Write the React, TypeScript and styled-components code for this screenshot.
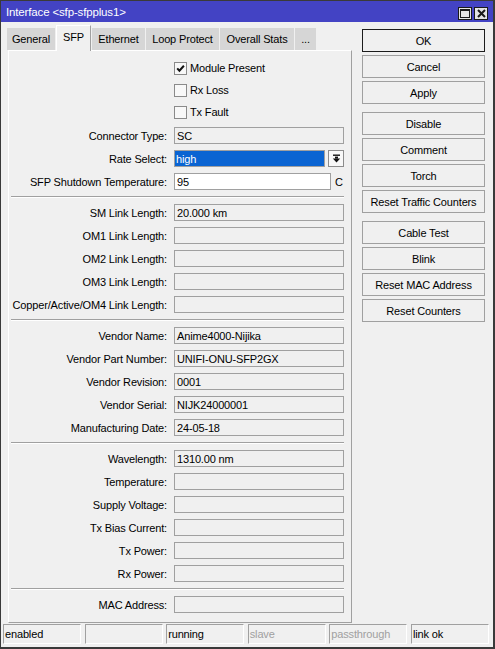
import React from "react";
import styled, { createGlobalStyle } from "styled-components";

const GlobalStyle = createGlobalStyle`
  html, body { margin: 0; padding: 0; background: #f0f0f0; }
  body { font-family: "Liberation Sans", Arial, sans-serif; font-size: 11px; }
`;

const Window = styled.div`
  width: 495px;
  height: 649px;
  box-sizing: border-box;
  border: 1px solid #3a3a3a;
  border-right-width: 2px;
  border-bottom-width: 2px;
  background: #f0f0f0;
  display: flex;
  flex-direction: column;
  font-family: "Liberation Sans", Arial, sans-serif;
  font-size: 11px;
  letter-spacing: -0.15px;
  color: #000;
  overflow: hidden;
`;

const TitleBar = styled.div`
  height: 21px;
  flex: none;
  background: #4343c4;
  color: #fff;
  display: flex;
  align-items: center;
  justify-content: space-between;
  padding: 0 5px 0 5px;
`;

const TitleText = styled.span`
  white-space: nowrap;
  font-size: 11.5px;
`;

const TitleButtons = styled.div`
  display: flex;
  gap: 2px;
  align-self: flex-end;
  margin-bottom: 2px;
`;

const TitleBox = styled.div`
  width: 14px;
  height: 13px;
  box-sizing: border-box;
  border: 1px solid #1a1a1a;
  background: #e4e4e4;
  display: flex;
  align-items: center;
  justify-content: center;
`;

const Body = styled.div`
  flex: 1;
  min-height: 0;
  display: flex;
`;

const LeftCol = styled.div`
  width: 345px;
  margin: 3px 0 0 6px;
  display: flex;
  flex-direction: column;
`;

const TabRow = styled.div`
  height: 25px;
  flex: none;
  display: flex;
  align-items: flex-end;
`;

const Tab = styled.div<{ $w: number; $active?: boolean }>`
  width: ${(p) => p.$w}px;
  box-sizing: border-box;
  margin-right: 1px;
  display: flex;
  align-items: center;
  justify-content: center;
  white-space: nowrap;
  height: ${(p) => (p.$active ? 26 : 22)}px;
  background: ${(p) => (p.$active ? "#f0f0f0" : "#d6d6d6")};
  margin-bottom: ${(p) => (p.$active ? -1 : 0)}px;
  padding-bottom: ${(p) => (p.$active ? 3 : 0)}px;
  border-left: ${(p) => (p.$active ? "1px solid #ffffff" : "none")};
  border-top: ${(p) => (p.$active ? "1px solid #ffffff" : "none")};
  border-right: ${(p) => (p.$active ? "1px solid #a0a0a0" : "none")};
  position: relative;
  z-index: ${(p) => (p.$active ? 1 : 0)};
`;

const Panel = styled.div`
  flex: 1;
  width: 344px;
  margin-left: 1px;
  box-sizing: border-box;
  border-top: 1px solid #ffffff;
  border-left: 1px solid #ffffff;
  border-right: 1px solid #a0a0a0;
  border-bottom: 1px solid #a0a0a0;
  padding-top: 6px;
`;

const CheckGroup = styled.div`
  margin-bottom: 1px;
`;

const Row = styled.div<{ $h?: number }>`
  height: ${(p) => p.$h ?? 23}px;
  display: grid;
  grid-template-columns: 158px 170px;
  column-gap: 7px;
  align-items: center;
`;

const Label = styled.div`
  display: flex;
  justify-content: flex-end;
  white-space: nowrap;
`;

const Content = styled.div`
  display: flex;
  align-items: center;
  gap: 3px;
`;

const Field = styled.div<{ $w?: number; $editable?: boolean }>`
  width: ${(p) => (p.$w ? `${p.$w}px` : "100%")};
  height: 17px;
  box-sizing: border-box;
  border: 1px solid #a0a0a0;
  background: ${(p) => (p.$editable ? "#ffffff" : "#f0f0f0")};
  padding-left: 2px;
  display: flex;
  align-items: center;
  white-space: nowrap;
  overflow: hidden;
`;

const SelectValue = styled.div`
  width: 151px;
  height: 17px;
  box-sizing: border-box;
  border: 1px solid #a0a0a0;
  background: #0a64d2;
  color: #ffffff;
  padding-left: 1px;
  display: flex;
  align-items: center;
`;

const DropButton = styled.div`
  width: 16px;
  height: 17px;
  box-sizing: border-box;
  border: 1px solid #8c8c8c;
  background: #f8f8f8;
  display: flex;
  align-items: center;
  justify-content: center;
`;

const Unit = styled.span`
  margin-left: 1px;
`;

const CheckBox = styled.div`
  width: 13px;
  height: 13px;
  box-sizing: border-box;
  border: 1px solid #8a8a8a;
  background: #f8f8f8;
  display: flex;
  align-items: center;
  justify-content: center;
`;

const Separator = styled.div`
  height: 0;
  margin: 3px 7px 3px 2px;
  border-top: 1px solid #a0a0a0;
  border-bottom: 1px solid #ffffff;
`;

const RightCol = styled.div`
  width: 123px;
  margin: 7px 0 0 10px;
  display: flex;
  flex-direction: column;
  gap: 3px;
`;

const Button = styled.div<{ $default?: boolean; $groupStart?: boolean }>`
  height: 23px;
  box-sizing: border-box;
  border: 1px solid ${(p) => (p.$default ? "#1c1c1c" : "#a0a0a0")};
  background: #f0f0f0;
  display: flex;
  align-items: center;
  justify-content: center;
  white-space: nowrap;
  margin-top: ${(p) => (p.$groupStart ? 5 : 0)}px;
`;

const StatusBar = styled.div`
  flex: none;
  height: 24px;
  box-sizing: border-box;
  padding: 1px 4px 3px 2px;
  display: grid;
  grid-template-columns: repeat(6, 1fr);
  column-gap: 3.5px;
`;

const StatusCell = styled.div<{ $dim?: boolean }>`
  height: 20px;
  box-sizing: border-box;
  border-top: 1px solid #a0a0a0;
  border-left: 1px solid #a0a0a0;
  border-right: 1px solid #ffffff;
  border-bottom: 1px solid #ffffff;
  padding-left: 1px;
  display: flex;
  align-items: center;
  white-space: nowrap;
  color: ${(p) => (p.$dim ? "#a0a0a0" : "#000000")};
`;

const MaxIcon = () => (
  <svg width="10" height="9" viewBox="0 0 10 9">
    <rect x="0.5" y="0.5" width="9" height="8" fill="none" stroke="#1a1a1a" />
    <rect x="0" y="0" width="10" height="2" fill="#1a1a1a" />
  </svg>
);

const CloseIcon = () => (
  <svg width="9" height="9" viewBox="0 0 9 9">
    <path d="M1 1 L8 8 M8 1 L1 8" stroke="#1a1a1a" strokeWidth="2" />
  </svg>
);

const CheckIcon = () => (
  <svg width="9" height="9" viewBox="0 0 9 9">
    <path d="M1.2 4.4 L3.4 6.7 L7.9 1.8" fill="none" stroke="#111" strokeWidth="2" />
  </svg>
);

const DropIcon = () => (
  <svg width="9" height="9" viewBox="0 0 9 9">
    <rect x="1" y="0.5" width="7" height="1.4" fill="#111" />
    <rect x="3" y="2.6" width="3" height="2" fill="#111" />
    <path d="M0.8 4.4 L8.2 4.4 L4.5 8.4 Z" fill="#111" />
  </svg>
);

const tabs = [
  { name: "General", w: 48 },
  { name: "SFP", w: 35, active: true },
  { name: "Ethernet", w: 53 },
  { name: "Loop Protect", w: 73 },
  { name: "Overall Stats", w: 74 },
  { name: "...", w: 21 },
];

const checks = [
  { name: "Module Present", checked: true },
  { name: "Rx Loss", checked: false },
  { name: "Tx Fault", checked: false },
];

const groups: { label: string; value: string }[][] = [
  [
    { label: "SM Link Length:", value: "20.000 km" },
    { label: "OM1 Link Length:", value: "" },
    { label: "OM2 Link Length:", value: "" },
    { label: "OM3 Link Length:", value: "" },
    { label: "Copper/Active/OM4 Link Length:", value: "" },
  ],
  [
    { label: "Vendor Name:", value: "Anime4000-Nijika" },
    { label: "Vendor Part Number:", value: "UNIFI-ONU-SFP2GX" },
    { label: "Vendor Revision:", value: "0001" },
    { label: "Vendor Serial:", value: "NIJK24000001" },
    { label: "Manufacturing Date:", value: "24-05-18" },
  ],
  [
    { label: "Wavelength:", value: "1310.00 nm" },
    { label: "Temperature:", value: "" },
    { label: "Supply Voltage:", value: "" },
    { label: "Tx Bias Current:", value: "" },
    { label: "Tx Power:", value: "" },
    { label: "Rx Power:", value: "" },
  ],
  [{ label: "MAC Address:", value: "" }],
];

const buttons = [
  { name: "OK", def: true },
  { name: "Cancel" },
  { name: "Apply" },
  { name: "Disable", start: true },
  { name: "Comment" },
  { name: "Torch" },
  { name: "Reset Traffic Counters" },
  { name: "Cable Test", start: true },
  { name: "Blink" },
  { name: "Reset MAC Address" },
  { name: "Reset Counters" },
];

const status = [
  { text: "enabled" },
  { text: "" },
  { text: "running" },
  { text: "slave", dim: true },
  { text: "passthrough", dim: true },
  { text: "link ok" },
];

export default function App() {
  return (
    <>
      <GlobalStyle />
      <Window>
        <TitleBar>
          <TitleText>Interface &lt;sfp-sfpplus1&gt;</TitleText>
          <TitleButtons>
            <TitleBox>
              <MaxIcon />
            </TitleBox>
            <TitleBox>
              <CloseIcon />
            </TitleBox>
          </TitleButtons>
        </TitleBar>
        <Body>
          <LeftCol>
            <TabRow>
              {tabs.map((t) => (
                <Tab key={t.name} $w={t.w} $active={t.active}>
                  {t.name}
                </Tab>
              ))}
            </TabRow>
            <Panel>
              <CheckGroup>
                {checks.map((c) => (
                  <Row key={c.name} $h={22}>
                    <Label />
                    <Content>
                      <CheckBox>{c.checked && <CheckIcon />}</CheckBox>
                      <span>{c.name}</span>
                    </Content>
                  </Row>
                ))}
              </CheckGroup>
              <Row>
                <Label>Connector Type:</Label>
                <Field>SC</Field>
              </Row>
              <Row>
                <Label>Rate Select:</Label>
                <Content>
                  <SelectValue>high</SelectValue>
                  <DropButton>
                    <DropIcon />
                  </DropButton>
                </Content>
              </Row>
              <Row>
                <Label>SFP Shutdown Temperature:</Label>
                <Content>
                  <Field $w={157} $editable>
                    95
                  </Field>
                  <Unit>C</Unit>
                </Content>
              </Row>
              {groups.map((g, gi) => (
                <React.Fragment key={gi}>
                  <Separator />
                  {g.map((r) => (
                    <Row key={r.label}>
                      <Label>{r.label}</Label>
                      <Field>{r.value}</Field>
                    </Row>
                  ))}
                </React.Fragment>
              ))}
            </Panel>
          </LeftCol>
          <RightCol>
            {buttons.map((b) => (
              <Button key={b.name} $default={b.def} $groupStart={b.start}>
                {b.name}
              </Button>
            ))}
          </RightCol>
        </Body>
        <StatusBar>
          {status.map((s, i) => (
            <StatusCell key={i} $dim={s.dim}>
              {s.text}
            </StatusCell>
          ))}
        </StatusBar>
      </Window>
    </>
  );
}
